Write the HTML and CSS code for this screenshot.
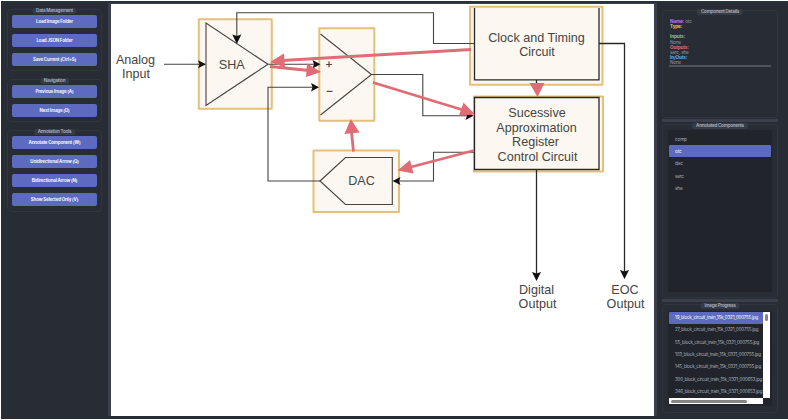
FILE: index.html
```html
<!DOCTYPE html>
<html lang="en">
<head>
<meta charset="utf-8">
<title>Circuit Annotation Tool</title>
<link rel="stylesheet" href="styles.css">
</head>
<body>
<div class="app">
  <aside class="sidebar">
    <fieldset class="group"><legend>Data Management</legend>
      <button>Load Image Folder</button>
      <button>Load JSON Folder</button>
      <button>Save Current (Ctrl+S)</button>
    </fieldset>
    <fieldset class="group nav"><legend>Navigation</legend>
      <button>Previous Image (A)</button>
      <button>Next Image (D)</button>
    </fieldset>
    <fieldset class="group tools"><legend>Annotation Tools</legend>
      <button>Annotate Component (W)</button>
      <button>Unidirectional Arrow (Q)</button>
      <button>Bidirectional Arrow (N)</button>
      <button>Show Selected Only (V)</button>
    </fieldset>
  </aside>
  <main class="canvas">
    <svg viewBox="111 4 543 412" width="543" height="412">
      <g class="boxes">
        <rect x="198.800" y="19.300" width="73" height="89.500"/>
        <rect x="319.300" y="28.300" width="55" height="92.500"/>
        <rect x="470" y="6.800" width="132.500" height="78"/>
        <rect x="474" y="96.500" width="129" height="75"/>
        <rect x="313.500" y="150.500" width="85.500" height="61.500"/>
      </g>
      <g class="wires">
        <path d="M164 64.300H200M206 23V105.500L268 64.300ZM268 64.300H314"/>
        <path d="M320.500 34L371.500 74.500L320.500 115"/>
        <path d="M474 43.500H433.500V12.800H236.800V36"/>
        <path d="M371.500 74.500H422.800V115.800H468"/>
        <path d="M474 152.300H433.500V181H397M320 181H268V87.200H313"/>
        <path d="M320 181L345.500 157.500H392.300V204.500H345.500Z"/>
        <path class="bold" d="M474.500 8V79.800H599V8M474.500 97.500H599V169.500H474.500Z"/>
        <path class="bold" d="M599 43.500H624.500V274M536.500 80V88M536.500 170V275"/>
      </g>
      <g class="heads">
        <path d="M206 64.300l-8-4 1.500 4-1.500 4z"/>
        <path d="M236.800 44l-4.500-9.500 4.500 1.500 4.500-1.500z"/>
        <path d="M320.500 64.300l-8-4.300 1.500 4.300-1.500 4.300z"/>
        <path d="M319 87.200l-8-4.300 1.500 4.300-1.500 4.300z"/>
        <path d="M473.500 115.800l-8-4.300 1.500 4.300-1.500 4.300z"/>
        <path d="M392.500 181l8-4-1.500 4 1.500 4z"/>
        <path d="M624.500 279l-4.500-9 4.500 1.500 4.500-1.500z"/>
        <path d="M536.500 281l-4.500-9 4.500 1.500 4.500-1.500z"/>
      </g>
      <g class="labels">
        <text x="135.500" y="64">Analog</text><text x="136" y="78">Input</text>
        <text x="231.800" y="69">SHA</text>
        <text class="sign" x="329" y="68.200">+</text><text class="sign" x="329.500" y="95">−</text>
        <text x="536.500" y="42">Clock and Timing</text><text x="537" y="56">Circuit</text>
        <text x="537" y="117.500">Sucessive</text><text x="536.500" y="132">Approximation</text>
        <text x="535.500" y="146.500">Register</text><text x="537.500" y="161">Control Circuit</text>
        <text x="361.500" y="185.500">DAC</text>
        <text x="536.500" y="294.300">Digital</text><text x="537.500" y="308.500">Output</text>
        <text x="625" y="294.300">EOC</text><text x="625.500" y="308.500">Output</text>
      </g>
      <g class="links">
        <path d="M471 49.500L282 60.500M270 66.500L309 70.500M373 82.500L463 110M474 150.500L409 167.500M353.500 151.500L351.500 132M536.500 84V88"/>
        <g class="tips">
          <path d="M270 62L284 53.500L285 67.500Z"/>
          <path d="M321 72L306 77L307 63.500Z"/>
          <path d="M475 114.500L459 115.500L463.500 102.500Z"/>
          <path d="M397.500 170.500L410 160L413.500 173.500Z"/>
          <path d="M350.800 119L344.500 134L359.500 132.500Z"/>
          <path d="M537.500 97L529.500 83H544.500Z"/>
        </g>
      </g>
    </svg>
  </main>
  <aside class="inspector">
    <fieldset class="group details"><legend>Component Details</legend>
      <div class="info">
        <p><b class="name">Name:</b> otc</p>
        <p><b class="type">Type:</b></p>
        <p>&nbsp;</p>
        <p><b class="in">Inputs:</b></p>
        <p>None</p>
        <p><b class="out">Outputs:</b></p>
        <p>sarc, sha</p>
        <p><b class="both">In/Outs:</b></p>
        <p>None</p>
      </div>
    </fieldset>
    <div class="splitter"></div>
    <fieldset class="group components"><legend>Annotated Components</legend>
      <ul class="list">
        <li>comp</li><li class="selected">otc</li><li>dac</li><li>sarc</li><li>sha</li>
      </ul>
    </fieldset>
    <div class="splitter"></div>
    <fieldset class="group progress"><legend>Image Progress</legend>
      <div class="list files">
        <ul>
          <li class="selected">19_block_circuit_train_15k_0321_000755.jpg</li>
          <li>27_block_circuit_train_15k_0321_000755.jpg</li>
          <li>55_block_circuit_train_15k_0321_000755.jpg</li>
          <li>103_block_circuit_train_15k_0321_000755.jpg</li>
          <li>145_block_circuit_train_15k_0321_000755.jpg</li>
          <li>300_block_circuit_train_15k_0321_000653.jpg</li>
          <li>346_block_circuit_train_15k_0321_000653.jpg</li>
        </ul>
        <div class="vbar"><i></i></div>
        <div class="hbar"><i></i></div>
      </div>
    </fieldset>
  </aside>
</div>
</body>
</html>
```

FILE: styles.css
```css
* { box-sizing: border-box; }
body { margin: 0; width: 788px; height: 420px; padding: 1px 0 1px 1px; overflow: hidden; background: #fff; font-family: Inter, "Liberation Sans", sans-serif; }
.app { display: flex; height: 418px; background: #282c34; border-top: 2px solid #26323a; }
.sidebar { width: 107px; padding: 6px 6px 0; }
.group { position: relative; display: flex; flex-direction: column; gap: 6px; min-width: 0; height: 62px; margin: 0; padding: 6px 4px 0; border: 1px solid #30353f; border-radius: 4px; }
.sidebar .group { padding-top: 5px; }
legend { position: absolute; top: -2px; left: 50%; transform: translateX(-50%); padding: 0 4px; height: 6px; border-radius: 2px; background: #353a45; color: #abb2bf; font-size: 4.6px; letter-spacing: -0.25px; line-height: 6px; font-weight: 600; white-space: nowrap; }
.sidebar .nav { height: 43px; margin-top: 8px; }
.sidebar .tools { height: 82px; margin-top: 8px; }
button { flex: 0 0 13px; padding: 0; border: 0; border-radius: 2px; background: #5c6bc0; color: #f3f4fb; font: 700 4.5px/13px Inter, sans-serif; letter-spacing: -0.2px; }
.canvas { width: 549px; padding: 1px 3px 0; background: #3a3f4b; border-bottom: 3px solid #282c34; height: 416px; }
.canvas svg { display: block; background: #fff; }
.boxes rect { fill: #fcf7f0; stroke: #e5c07b; stroke-width: 2; stroke-linejoin: round; }
.wires { fill: none; stroke: #45433f; stroke-width: 1.1; }
.wires .bold { stroke: #292826; stroke-width: 1.3; }
.heads { fill: #111; }
.labels { fill: #464543; font: 12.6px "Liberation Sans", sans-serif; text-anchor: middle; transform: translateY(-0.5px); }
.labels .sign { font-size: 11px; stroke: #464543; stroke-width: 0.3px; }
.links { fill: none; stroke: #e06c75; stroke-width: 2.8; }
.tips { fill: #e06c75; stroke: none; }
.inspector { width: 131px; padding: 7px 10px 0 5px; }
.details { height: 108px; padding: 7px 6px; }
.info { padding: 1px 1px 0; color: #969ca8; font-size: 4.6px; letter-spacing: -0.12px; line-height: 5.17px; height: 48.5px; border-bottom: 2px solid #50545c; }
.info p { margin: 0; height: 5.17px; }
.name { color: #c678dd; } .type { color: #e5c07b; } .in { color: #98c379; } .out { color: #e06c75; } .both { color: #61afef; }
.splitter { height: 3px; margin: 1px 0 2px; background: #3a3f4b; }
.components { height: 174px; padding: 5px; }
.list { flex: 1; margin: 0; padding: 2.500px 1px; background: #21252b; border-radius: 2px; list-style: none; color: #abb2bf; font-size: 4.6px; letter-spacing: -0.12px; }
.list li { height: 12.35px; padding-left: 6px; line-height: 13px; white-space: nowrap; border-radius: 1px; }
.list .selected { background: #5c6bc0; color: #fff; }
.progress { height: 109px; padding: 6px 5px; }
.files { display: grid; grid-template: 86px 6px / 94px 7px; padding: 1px; }
.files ul { margin: 0; padding: 0; list-style: none; overflow: hidden; font-size: 4.5px; letter-spacing: -0.2px; }
.files li { line-height: 12.35px; }
.vbar { background: #fff; padding: 2px 2px; }
.vbar i { display: block; width: 3px; height: 7px; border-radius: 1.5px; background: #858585; }
.hbar { background: #fff; padding: 2px; }
.hbar i { display: block; width: 76px; height: 3px; border-radius: 1.5px; background: #858585; }
```
